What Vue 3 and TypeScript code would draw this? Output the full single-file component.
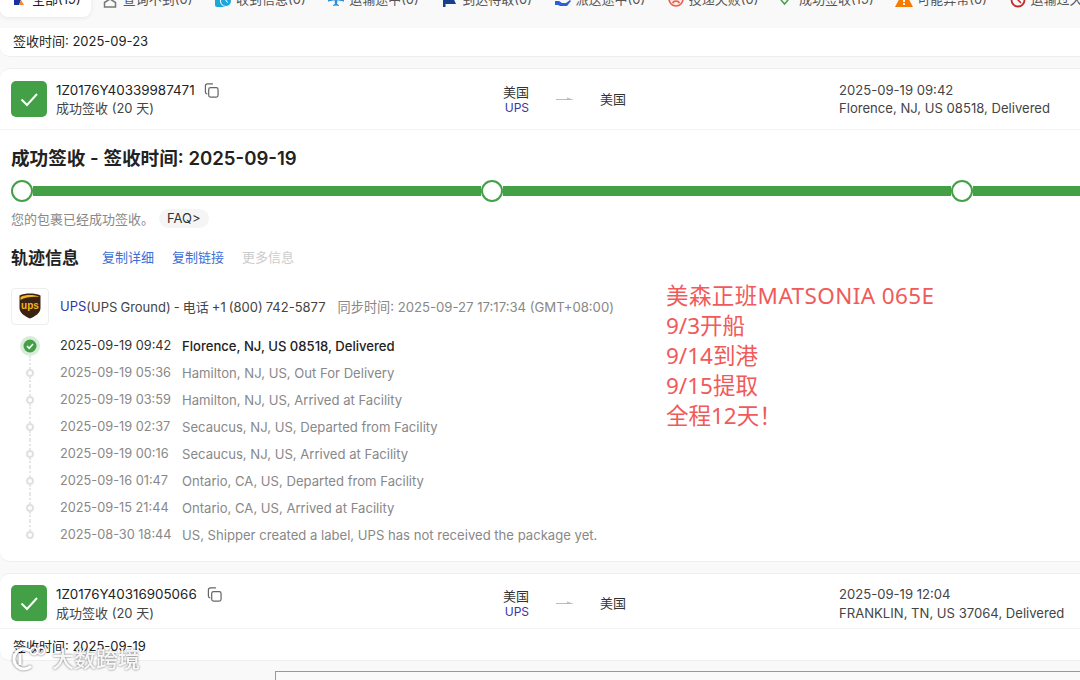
<script setup lang="ts">
interface Tab { label: string; icon: string; active?: boolean }
const tabs: Tab[] = [
  { label: '全部(19)', icon: 'all', active: true },
  { label: '查询不到(0)', icon: 'home' },
  { label: '收到信息(0)', icon: 'clock' },
  { label: '运输途中(0)', icon: 'plane' },
  { label: '到达待取(0)', icon: 'flag' },
  { label: '派送途中(0)', icon: 'hand' },
  { label: '投递失败(0)', icon: 'sad' },
  { label: '成功签收(19)', icon: 'check' },
  { label: '可能异常(0)', icon: 'warn' },
  { label: '运输过久(0)', icon: 'late' },
]
const events = [
  { time: '2025-09-19 09:42', desc: 'Florence, NJ, US 08518, Delivered' },
  { time: '2025-09-19 05:36', desc: 'Hamilton, NJ, US, Out For Delivery' },
  { time: '2025-09-19 03:59', desc: 'Hamilton, NJ, US, Arrived at Facility' },
  { time: '2025-09-19 02:37', desc: 'Secaucus, NJ, US, Departed from Facility' },
  { time: '2025-09-19 00:16', desc: 'Secaucus, NJ, US, Arrived at Facility' },
  { time: '2025-09-16 01:47', desc: 'Ontario, CA, US, Departed from Facility' },
  { time: '2025-09-15 21:44', desc: 'Ontario, CA, US, Arrived at Facility' },
  { time: '2025-08-30 18:44', desc: 'US, Shipper created a label, UPS has not received the package yet.' },
]
const note = ['美森正班MATSONIA 065E', '9/3开船', '9/14到港', '9/15提取', '全程12天！']
</script>

<template>
  <div class="page">
    <nav class="tabs">
      <div v-for="t in tabs" :key="t.label" class="tab" :class="[{ active: t.active }, 'tab-' + t.icon]">
        <svg class="tab-icon" viewBox="0 0 18 18" width="18" height="18">
          <template v-if="t.icon === 'all'">
            <path d="M3 2h5v13H5V5H3z" fill="#1a2fa0" /><path d="M9 2h6l-5 13H7z" fill="#1a2fa0" /><path d="M12 10l3 5h-5z" fill="#f08a24" />
          </template>
          <path v-else-if="t.icon === 'home'" d="M3.500 17v-4.500L9 9l5.500 3.500V17z" fill="none" stroke="#777" stroke-width="1.500" />
          <template v-else-if="t.icon === 'clock'">
            <rect x="1" y="2" width="13" height="15" rx="2" fill="#1ba7dc" /><circle cx="12" cy="11" r="5.500" fill="#1ba7dc" stroke="#fff" /><path d="M12 8v3l2 1.500" stroke="#fff" fill="none" />
          </template>
          <path v-else-if="t.icon === 'plane'" d="M8 1h2l.6 6 6.400 3v1.600l-6.600-1.400-.4 3.600 2 1.400V16l-3-.6-3 .6v-.8l2-1.400-.4-3.600L1 11.600V10l6.400-3z" fill="#2a8fd8" />
          <path v-else-if="t.icon === 'flag'" d="M3 2h2.500v15H3zM5.500 3H16l-2.500 5.500L16 14H5.500z" fill="#16418f" />
          <path v-else-if="t.icon === 'hand'" d="M1 11h4l3 2h4l4-3 1 1-4 5H6l-2-1H1zM7 3h7v6H7z" fill="#2d5fd6" />
          <template v-else-if="t.icon === 'sad'">
            <circle cx="9" cy="9" r="7" fill="#fde6e2" stroke="#e8604c" stroke-width="1.600" /><path d="M5.500 13a4 4 0 0 1 7 0" fill="none" stroke="#e8604c" stroke-width="1.600" />
          </template>
          <path v-else-if="t.icon === 'check'" d="M1 10l4.500 5L13 6" fill="none" stroke="#43a047" stroke-width="1.800" />
          <template v-else-if="t.icon === 'warn'">
            <path d="M9 0l9 17H0z" fill="#f57c00" /><rect x="8" y="6" width="2" height="6" fill="#fff" /><rect x="8" y="13" width="2" height="2" fill="#fff" />
          </template>
          <template v-else>
            <circle cx="10" cy="10" r="6.500" fill="none" stroke="#c62828" stroke-width="1.800" /><path d="M1 6l6 2M10 6v4l3 3" fill="none" stroke="#c62828" stroke-width="1.600" />
          </template>
        </svg>
        <span>{{ t.label }}</span>
      </div>
    </nav>

    <section class="card prev">签收时间: 2025-09-23</section>

    <section class="card main">
      <header class="head">
        <div class="status-box">
          <svg viewBox="0 0 36 36" width="36" height="36"><path d="M10.500 18.500l5.500 5.500 10-11" fill="none" stroke="#fff" stroke-width="2" /></svg>
        </div>
        <div class="ident">
          <div class="num">1Z0176Y40339987471
            <svg class="copy" viewBox="0 0 16 16" width="15" height="15"><rect x="5" y="5" width="10" height="10" rx="2" fill="none" stroke="#666" stroke-width="1.300" /><path d="M3.500 11.500A2 2 0 0 1 1.500 9.500V3A2 2 0 0 1 3.500 1h6" fill="none" stroke="#666" stroke-width="1.300" /></svg>
          </div>
          <div class="sub">成功签收 (20 天)</div>
        </div>
        <div class="route">
          <div class="origin"><div>美国</div><div class="ups">UPS</div></div>
          <svg class="arrow" viewBox="0 0 18 6" width="18" height="6"><path d="M0 3h11V1.500L18 4H0z" fill="#bbb" /></svg>
          <div class="dest">美国</div>
        </div>
        <div class="latest">
          <div>2025-09-19 09:42</div>
          <div>Florence, NJ, US 08518, Delivered</div>
        </div>
      </header>

      <div class="body">
        <h2 class="title">成功签收 - 签收时间: 2025-09-19</h2>
        <div class="progress">
          <i class="node" /><i class="seg" /><i class="node" /><i class="seg" /><i class="node" /><i class="seg" />
        </div>
        <div class="hint">您的包裹已经成功签收。<span class="faq">FAQ&gt;</span></div>
        <div class="track-head">
          <h3>轨迹信息</h3>
          <a>复制详细</a><a>复制链接</a><a class="off">更多信息</a>
        </div>
        <div class="carrier">
          <div class="logo">
            <svg viewBox="0 0 22 26" width="22" height="26">
              <path d="M11 0.500C15 0.500 18.500 1 21.500 2.500V15C21.500 20 16 23.500 11 25.500 6 23.500 .5 20 .5 15V2.500C3.500 1 7 .5 11 .5z" fill="#3b2314" />
              <path d="M11 2C7.500 2 4 2.500 1.500 4V7C6 4 14 3.500 20.500 4 18 2.500 14.500 2 11 2z" fill="#f4b71e" />
              <text x="11" y="16" text-anchor="middle" class="ups-mark">ups</text>
            </svg>
          </div>
          <span class="ups">UPS</span><span class="tight">(UPS Ground) - 电话 +1 (800) 742-5877</span>
          <span class="sync">同步时间: 2025-09-27 17:17:34 (GMT+08:00)</span>
        </div>
        <ul class="events">
          <li v-for="(e, i) in events" :key="e.time" class="event" :class="{ first: i === 0 }">
            <div class="rail">
              <i class="line" :class="{ hide: i === 0 }" />
              <svg v-if="i === 0" class="done" viewBox="0 0 20 20" width="20" height="20">
                <circle cx="10" cy="10" r="10" fill="#d9ecd9" /><circle cx="10" cy="10" r="6.500" fill="#43a047" /><path d="M7 10l2.200 2.300L13 8" fill="none" stroke="#fff" stroke-width="1.500" />
              </svg>
              <i v-else class="dot" />
              <i class="line" :class="{ hide: i === events.length - 1 }" />
            </div>
            <span class="time">{{ e.time }}</span>
            <span class="desc">{{ e.desc }}</span>
          </li>
        </ul>
      </div>
    </section>

    <section class="card next">
      <header class="head">
        <div class="status-box">
          <svg viewBox="0 0 36 36" width="36" height="36"><path d="M10.500 18.500l5.500 5.500 10-11" fill="none" stroke="#fff" stroke-width="2" /></svg>
        </div>
        <div class="ident">
          <div class="num">1Z0176Y40316905066
            <svg class="copy" viewBox="0 0 16 16" width="15" height="15"><rect x="5" y="5" width="10" height="10" rx="2" fill="none" stroke="#666" stroke-width="1.300" /><path d="M3.500 11.500A2 2 0 0 1 1.500 9.500V3A2 2 0 0 1 3.500 1h6" fill="none" stroke="#666" stroke-width="1.300" /></svg>
          </div>
          <div class="sub">成功签收 (20 天)</div>
        </div>
        <div class="route">
          <div class="origin"><div>美国</div><div class="ups">UPS</div></div>
          <svg class="arrow" viewBox="0 0 18 6" width="18" height="6"><path d="M0 3h11V1.500L18 4H0z" fill="#bbb" /></svg>
          <div class="dest">美国</div>
        </div>
        <div class="latest">
          <div>2025-09-19 12:04</div>
          <div>FRANKLIN, TN, US 37064, Delivered</div>
        </div>
      </header>
      <div class="sign">签收时间: 2025-09-19</div>
    </section>

    <div class="footer-box" />

    <div class="note">
      <div v-for="(n, i) in note" :key="n" :class="{ wide: i === 0 }">{{ n }}</div>
    </div>

    <div class="mark">
      <svg viewBox="0 0 36 26" width="36" height="26">
        <path d="M20 5A10 10 0 1 0 21 20" fill="none" stroke="#fff" stroke-width="3" />
        <path d="M10 8v11" stroke="#fff" stroke-width="3" />
        <circle cx="24" cy="5" r="3.500" fill="none" stroke="#fff" stroke-width="1.800" />
        <circle cx="31" cy="5" r="3.500" fill="none" stroke="#fff" stroke-width="1.800" />
      </svg>
      <span>大数跨境</span>
    </div>
  </div>
</template>

<style scoped>
.page {
  position: relative;
  width: 1080px;
  height: 680px;
  overflow: hidden;
  background: #f9f9fa;
  font-family: Inter, "Noto Sans CJK SC", sans-serif;
  font-size: 13px;
  color: #333;
}
.tabs {
  display: flex;
  height: 34px;
  margin: -17px 0 11px;
  white-space: nowrap;
}
.tab {
  display: flex;
  align-items: center;
  gap: 4px;
  padding: 0 10.750px 3px;
  box-sizing: border-box;
  color: #555;
  flex: none;
}
.tab.active {
  width: 91px;
  padding: 0 12px 3px 9px;
  gap: 5px;
  margin-right: -1px;
  background: #fff;
  border-radius: 0 0 8px 8px;
  box-shadow: 0 1px 4px rgba(0, 0, 0, .08);
  color: #222;
}
.tab-icon { flex: none; margin-top: 1px; }
.tab-check .tab-icon { width: 15px; }
.card {
  width: 1110px;
  box-sizing: border-box;
  background: #fff;
  border: 1px solid #eee;
  border-left: 0;
  border-radius: 10px;
}
.prev {
  height: 29px;
  margin-bottom: 11px;
  padding-left: 13px;
  line-height: 26px;
  border-top: 0;
  border-radius: 0 0 10px 10px;
  color: #222;
}
.main { height: 494px; margin-bottom: 11px; }
.next { height: 88px; }
.head {
  display: flex;
  align-items: center;
  height: 60px;
  padding-left: 11px;
  border-bottom: 1px solid #f3f3f3;
}
.next .head {
  height: 55px;
  box-sizing: border-box;
  align-items: flex-start;
  padding-top: 11px;
}
.status-box {
  display: flex;
  width: 36px;
  height: 36px;
  flex: none;
  background: #43a047;
  border-radius: 5px;
}
.ident { width: 446px; margin-left: 9px; flex: none; line-height: 18px; }
.num { display: flex; align-items: center; gap: 9px; height: 18px; font-size: 13.400px; color: #222; }
.next .num { gap: 10px; margin-bottom: 1px; }
.sub { height: 18px; color: #444; }
.route { display: flex; align-items: center; width: 337px; height: 36px; flex: none; }
.origin { width: 28px; margin-left: -1px; margin-right: 1px; padding-top: 1px; text-align: right; line-height: 16px; color: #333; }
.origin .ups { font-size: 12px; }
.ups { color: #3336a8; }
.arrow { margin: 0 26px; }
.dest { margin-top: -2px; }
.latest { font-size: 13.100px; line-height: 18px; color: #444; }
.next .latest div + div { margin-top: 1px; }
.body { padding: 16px 0 0 11px; }
.title { margin: 0; font-size: 18.600px; line-height: 24px; font-weight: 600; color: #222; }
.progress { display: flex; align-items: center; height: 22px; margin-top: 10px; }
.node {
  width: 22px;
  height: 22px;
  box-sizing: border-box;
  flex: none;
  background: #fff;
  border: 2px solid #43a047;
  border-radius: 50%;
}
.seg { width: 448px; height: 10px; flex: none; background: #43a047; }
.hint {
  display: flex;
  align-items: center;
  height: 20px;
  margin-top: 6px;
  color: #888;
}
.faq {
  margin-left: 5px;
  padding: 0 8px;
  line-height: 19px;
  background: #f5f5f5;
  border-radius: 10px;
  color: #333;
}
.track-head {
  display: flex;
  align-items: center;
  height: 24px;
  margin-top: 16px;
}
.track-head h3 { margin: 0 23px 0 0; font-size: 17px; font-weight: 600; color: #222; }
.track-head a { margin-right: 18px; color: #3b6fd8; }
.track-head .off { color: #ccc; }
.carrier {
  display: flex;
  align-items: center;
  height: 38px;
  margin-top: 19px;
  color: #444;
}
.tight { word-spacing: -.6px; }
.logo {
  display: flex;
  align-items: center;
  justify-content: center;
  width: 38px;
  height: 37px;
  box-sizing: border-box;
  margin-right: 11px;
  border: 1px solid #eee;
  border-radius: 4px;
}
.ups-mark { font: 700 10px "Liberation Sans", sans-serif; fill: #f4b71e; }
.sync { margin-left: 12px; font-size: 13.150px; color: #888; }
.events { margin: 7px 0 0; padding: 0; list-style: none; }
.event { display: flex; align-items: center; height: 27px; color: #888; }
.rail {
  display: flex;
  flex-direction: column;
  align-items: center;
  width: 38px;
  height: 27px;
  flex: none;
  margin-right: 11px;
}
.line { flex: 1; border-left: 2px dotted #e6e6e6; }
.line.hide { border-color: transparent; }
.dot {
  width: 8px;
  height: 8px;
  box-sizing: border-box;
  flex: none;
  border: 2px solid #e0e0e0;
  border-radius: 50%;
}
.done { flex: none; }
.time { width: 122px; flex: none; font-size: 12.750px; }
.desc { font-size: 13.100px; }
.first .time { color: #333; }
.first .desc { color: #222; font-weight: 500; }
.sign { padding: 9px 0 0 13px; line-height: 16px; color: #222; }
.footer-box {
  width: 900px;
  height: 40px;
  margin: 10px 0 0 275px;
  box-sizing: border-box;
  border: 1px solid #999;
  background: #fafafa;
}
.note {
  position: absolute;
  left: 666px;
  top: 281px;
  font-family: "Noto Sans", "Noto Sans CJK SC", sans-serif;
  font-size: 22.500px;
  line-height: 30px;
  color: #f05a5a;
  white-space: nowrap;
}
.note .wide { letter-spacing: .4px; }
.mark {
  position: absolute;
  left: 10px;
  top: 645px;
  display: flex;
  align-items: center;
  gap: 6px;
  font-size: 22px;
  font-weight: 500;
  line-height: 28px;
  color: rgba(255, 255, 255, .92);
  filter: drop-shadow(0 0 1px rgba(0, 0, 0, .6));
}
</style>
